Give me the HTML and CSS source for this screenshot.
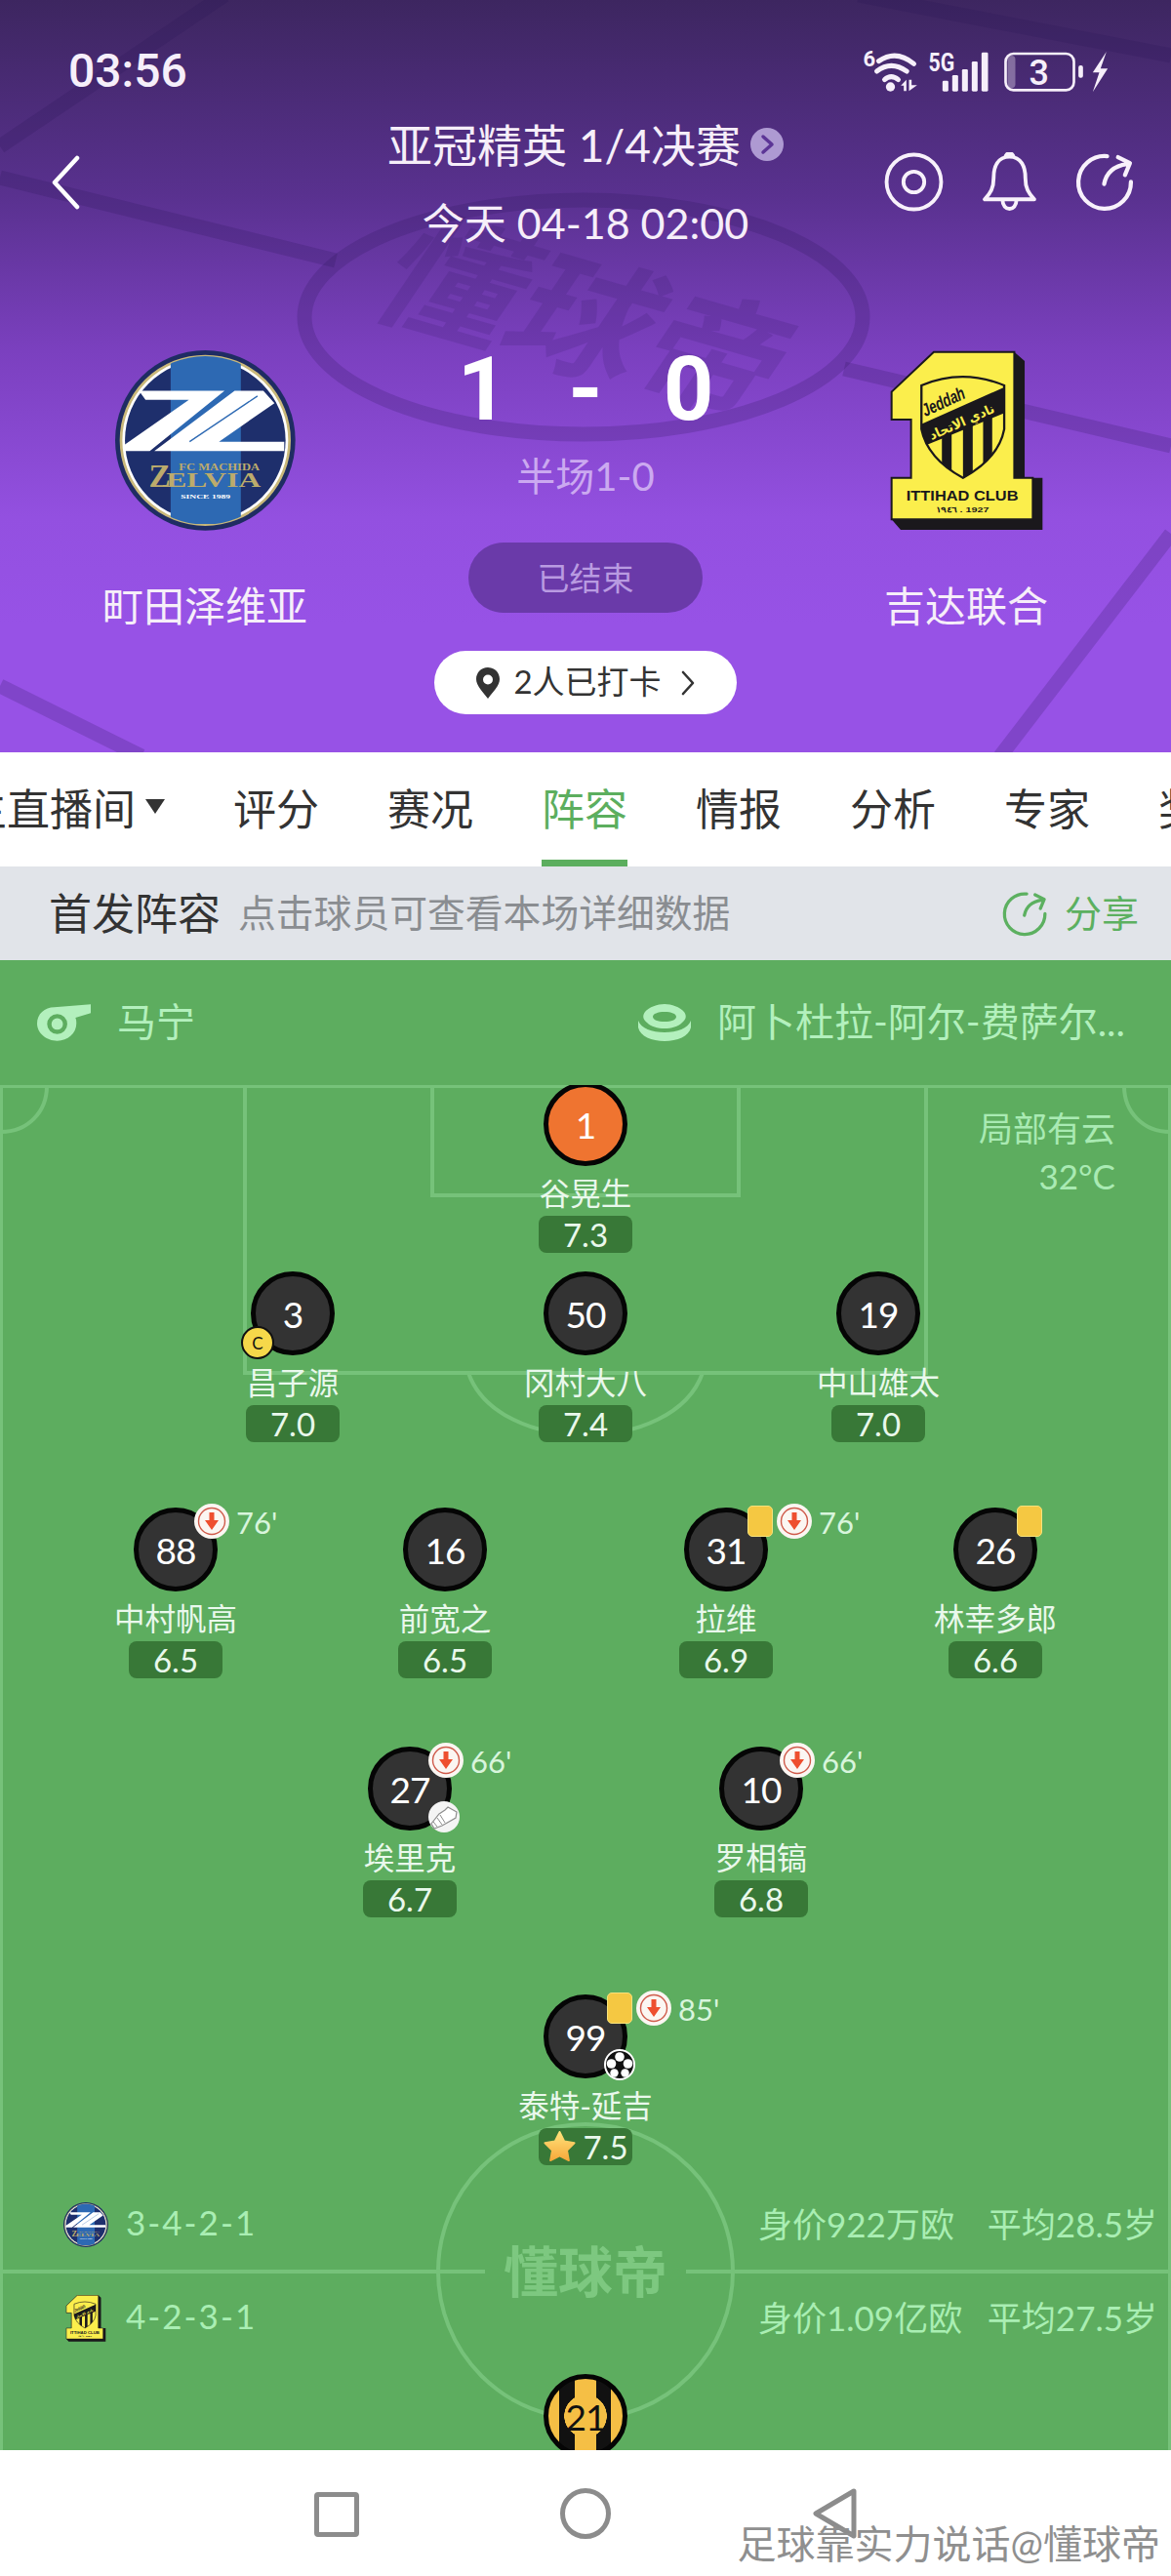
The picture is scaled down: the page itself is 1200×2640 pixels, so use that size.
FILE: index.html
```html
<!DOCTYPE html>
<html lang="zh">
<head>
<meta charset="utf-8">
<title>懂球帝 阵容</title>
<link rel="stylesheet" href="styles.css">
</head>
<body>
<svg class="defs" width="0" height="0" aria-hidden="true">
  <defs>
    <symbol id="crest-home" viewBox="112 88 553 553">
      <clipPath id="home-clip"><circle cx="388" cy="364" r="258"/></clipPath>
      <circle cx="388" cy="364" r="276" fill="#1f2c63"/>
      <circle cx="388" cy="364" r="258" fill="#fff"/>
      <circle cx="388" cy="364" r="258" fill="none" stroke="#c9b87a" stroke-width="8"/>
      <g clip-path="url(#home-clip)">
        <circle cx="388" cy="364" r="246" fill="#1e2f6c"/>
        <rect x="282" y="100" width="215" height="520" fill="#2d69b3"/>
        <path d="M185 212H447L218 397H140V378L338 240H205Z" fill="#fff"/>
        <path d="M478 212H566L600 250 430 368H630V397H232Z" fill="#fff"/>
        <path d="M548 228 340 368" stroke="#2d69b3" stroke-width="4"/>
      </g>
      <text x="307" y="455" textLength="248" lengthAdjust="spacingAndGlyphs" class="crest-serif home-small">FC MACHIDA</text>
      <text x="215" y="507" class="crest-serif home-z">Z</text>
      <text x="268" y="507" textLength="290" lengthAdjust="spacingAndGlyphs" class="crest-serif home-elvia">ELVIA</text>
      <text x="313" y="541" textLength="152" lengthAdjust="spacingAndGlyphs" class="crest-serif home-since">SINCE 1989</text>
    </symbol>
    <symbol id="crest-away" viewBox="95 58 472 554">
      <clipPath id="away-clip"><path d="M192 165Q318 112 447 165V300Q430 390 320 450Q210 390 192 300Z"/></clipPath>
      <path d="M128 610 100 578V450H160V270H100V185L230 62H478L510 90V450H565V610Z" fill="#1a181c"/>
      <path d="M100 578V450H160V270H100V185L230 62H478V450H535V578Z" fill="#fbee4c" stroke="#1a181c" stroke-width="6"/>
      <path d="M192 165Q318 112 447 165V300Q430 390 320 450Q210 390 192 300Z" fill="#fbee4c"/>
      <g clip-path="url(#away-clip)">
        <path d="M180 290 460 165V245L180 360Z" fill="#1a181c"/>
        <path d="M255 300h30v160h-30zM320 270h30v190h-30zM382 245h28v190h-28z" fill="#1a181c"/>
      </g>
      <path d="M192 165Q318 112 447 165V300Q430 390 320 450Q210 390 192 300Z" fill="none" stroke="#1a181c" stroke-width="7"/>
      <text x="204" y="262" textLength="140" lengthAdjust="spacingAndGlyphs" class="crest-jeddah" transform="rotate(-25 204 262)">Jeddah</text>
      <text x="322" y="290" textLength="215" lengthAdjust="spacingAndGlyphs" class="crest-arabic" transform="rotate(-24 322 290)">نادي الاتحاد</text>
      <text x="318" y="520" textLength="345" lengthAdjust="spacingAndGlyphs" class="crest-club">ITTIHAD CLUB</text>
      <text x="318" y="556" textLength="165" lengthAdjust="spacingAndGlyphs" class="crest-year">١٩٤٦ . 1927</text>
    </symbol>
    <symbol id="share" viewBox="0 0 60 60">
      <path d="M32 4A26.500 26.500 0 1 0 56 30" fill="none" stroke="currentColor" stroke-width="4.200" stroke-linecap="round"/>
      <path d="M29 32C31 22 38 14 52 12M43 5 55 11 50 23" fill="none" stroke="currentColor" stroke-width="4.200" stroke-linecap="round" stroke-linejoin="round"/>
    </symbol>
    <symbol id="sub-off" viewBox="0 0 36 36">
      <circle cx="18" cy="18" r="18" fill="#fbf6f2"/>
      <circle cx="18" cy="18" r="13.500" fill="none" stroke="#cf5b4b" stroke-width="1.400"/>
      <path d="M15.500 9h5v8H25L18 27 11 17h4.500Z" fill="#ee4f2f"/>
    </symbol>
    <linearGradient id="star-fill" x1="0" y1="0" x2="0" y2="1">
      <stop offset="0" stop-color="#ffe27a"/>
      <stop offset="1" stop-color="#f7a93b"/>
    </linearGradient>
  </defs>
</svg>

<main class="phone">
  <header class="hero">
    <svg class="hero-art" viewBox="0 0 1200 771" aria-hidden="true">
      <g fill="none" class="hero-lines">
        <ellipse cx="598" cy="325" rx="286" ry="120"/>
        <path d="M0 182 344 267M230 -5 0 150M880 -5 1200 57M865 378 1200 457M1200 547 1025 775M0 703 145 775"/>
      </g>
      <text class="hero-mark" x="0" y="48" transform="translate(600 330) rotate(16) skewX(-18)">懂球帝</text>
    </svg>

    <div class="status">
      <span class="clock">03:56</span>
      <svg class="status-icons" viewBox="70 60 770 135" aria-hidden="true">
        <text x="74" y="110" class="st-6">6</text>
        <g fill="none" stroke="#f6effa" stroke-width="15" stroke-linecap="round">
          <path d="M122 95Q175 58 230 103"/>
          <path d="M116 126Q160 92 208 126"/>
          <path d="M140 152Q160 134 182 152"/>
        </g>
        <circle cx="158" cy="174" r="14" fill="#f6effa"/>
        <path d="M207 152V187H199V170H190ZM215 187V152H223V169H240Z" fill="#f6effa"/>
        <text x="275" y="125" textLength="80" lengthAdjust="spacingAndGlyphs" class="st-5g">5G</text>
        <g fill="#f6effa">
          <rect x="318" y="155" width="18" height="33" rx="4"/>
          <rect x="348" y="138" width="18" height="50" rx="4"/>
          <rect x="378" y="120" width="18" height="68" rx="4"/>
          <rect x="408" y="96" width="18" height="92" rx="4"/>
          <rect x="438" y="68" width="20" height="120" rx="4"/>
        </g>
        <rect x="512" y="72" width="210" height="112" rx="24" fill="none" stroke="#f6effa" stroke-width="8"/>
        <rect x="518" y="78" width="24" height="100" rx="12" fill="#f6effa" opacity=".35"/>
        <text x="615" y="168" class="st-bat">3</text>
        <rect x="736" y="108" width="14" height="38" rx="6" fill="#f6effa"/>
        <path d="M822 66 780 130H800L780 190 826 118H804Z" fill="#f6effa"/>
      </svg>
    </div>

    <div class="topbar">
      <svg class="back" viewBox="0 0 30 56" aria-hidden="true"><path d="M27 3 4 28l23 25" fill="none" stroke="#fff" stroke-width="4.500" stroke-linecap="round" stroke-linejoin="round"/></svg>
      <div class="titles">
        <div class="title">亚冠精英 1/4决赛<svg class="title-go" viewBox="0 0 34 34" aria-hidden="true"><circle cx="17" cy="17" r="17" fill="#ae9ad2"/><path d="M13 9l9 8-9 8" fill="none" stroke="#5c3596" stroke-width="3.500" stroke-linecap="round" stroke-linejoin="round"/></svg></div>
        <div class="date">今天 04-18 02:00</div>
      </div>
      <div class="top-icons">
        <svg class="top-icon" viewBox="0 0 60 60" aria-hidden="true"><g fill="none" stroke="#f8f1fb" stroke-width="3.800"><circle cx="30" cy="30" r="27.500"/><circle cx="30" cy="30" r="10.500"/></g></svg>
        <svg class="top-icon" viewBox="0 0 60 60" aria-hidden="true"><g fill="none" stroke="#f8f1fb" stroke-width="3.800" stroke-linejoin="round"><path d="M30 4.500C18 4.500 14 15 14 26 14 36 11 41 5 47.500H55C49 41 46 36 46 26 46 15 42 4.500 30 4.500Z"/><path d="M23 48c0 12 14 12 14 0"/><path d="M26 5c0-5 8-5 8 0"/></g></svg>
        <svg class="top-icon share-white" aria-hidden="true"><use href="#share"/></svg>
      </div>
    </div>

    <section class="score">
      <div class="team">
        <svg class="crest crest-h" aria-hidden="true"><use href="#crest-home"/></svg>
        <div class="team-name">町田泽维亚</div>
      </div>
      <div class="mid">
        <div class="result"><span>1</span><span class="dash">-</span><span>0</span></div>
        <div class="half">半场1-0</div>
        <div class="state">已结束</div>
        <div class="checkin">
          <svg class="pin" viewBox="0 0 24 32" aria-hidden="true"><path fill-rule="evenodd" d="M12 0C5 0 0 5.500 0 12c0 7 7 13 12 20 5-7 12-13 12-20C24 5.500 19 0 12 0Zm0 7.500a5 5 0 1 1 0 10 5 5 0 0 1 0-10Z" fill="#333"/></svg>
          <span class="checkin-text">2人已打卡</span>
          <svg class="chev" viewBox="0 0 14 26" aria-hidden="true"><path d="M2 2l10 11L2 24" fill="none" stroke="#333" stroke-width="2.600" stroke-linecap="round" stroke-linejoin="round"/></svg>
        </div>
      </div>
      <div class="team">
        <svg class="crest crest-a" aria-hidden="true"><use href="#crest-away"/></svg>
        <div class="team-name">吉达联合</div>
      </div>
    </section>
  </header>

  <nav class="tabs">
    <span class="tab">主直播间<i class="caret"></i></span>
    <span class="tab">评分</span>
    <span class="tab">赛况</span>
    <span class="tab tab-on">阵容</span>
    <span class="tab">情报</span>
    <span class="tab">分析</span>
    <span class="tab">专家</span>
    <span class="tab">奖励</span>
  </nav>

  <div class="subhead">
    <strong class="sub-title">首发阵容</strong>
    <span class="sub-hint">点击球员可查看本场详细数据</span>
    <span class="sub-share"><svg class="sub-share-ic" aria-hidden="true"><use href="#share"/></svg><span class="sub-share-text">分享</span></span>
  </div>

  <div class="meta">
    <span class="meta-item">
      <svg class="whistle" viewBox="0 0 56 38" aria-hidden="true"><path fill-rule="evenodd" d="M18 3 56 0v9l-16 5c1 2 1 4 1 6 0 10-9 18-20 18S0 30 0 20 8 3 18 3Zm3 7a10.500 10.500 0 1 0 0 21 10.500 10.500 0 0 0 0-21Zm0 4.500a6 6 0 1 1 0 12 6 6 0 0 1 0-12Z" fill="#b3f0bd"/></svg>
      <span class="meta-text">马宁</span>
    </span>
    <span class="meta-item">
      <svg class="stadium" viewBox="0 0 54 38" aria-hidden="true"><g fill="#b3f0bd"><path d="M0 17c3 8 14 12 27 12s24-4 27-12v7c-2 9-14 14-27 14S2 33 0 24Z"/><path fill-rule="evenodd" d="M27 0c7 0 16 3 20 8 3 4 2 8-2 11-4 4-11 6-18 6s-14-2-18-6C5 16 4 12 7 8c4-5 13-8 20-8Zm0 8c-7 0-12 2-12 5s5 5 12 5 12-2 12-5-5-5-12-5Z"/></g></svg>
      <span class="meta-text">阿卜杜拉-阿尔-费萨尔...</span>
    </span>
  </div>

  <section class="pitch">
    <svg class="pitch-lines" viewBox="0 0 1200 1399" aria-hidden="true">
      <g fill="none" stroke="#76c27a" stroke-width="4">
        <path d="M1 0V1399M1199 0V1399M0 1H1200"/>
        <path d="M251 1V295H949V1M443 1V113H757V1"/>
        <path d="M1 48C28 48 48 28 48 1M1199 48C1172 48 1152 28 1152 1"/>
        <path d="M480 295C510 380 690 380 720 295"/>
        <path d="M0 1216H497M703 1216H1200"/>
        <circle cx="600" cy="1216" r="151"/>
      </g>
    </svg>
    <div class="weather"><span>局部有云</span><span>32°C</span></div>
    <div class="pitch-logo">懂球帝</div>

    <div class="side side-home">
      <svg class="mini" aria-hidden="true"><use href="#crest-home"/></svg>
      <span class="shape">3-4-2-1</span>
      <span class="worth">身价922万欧</span>
      <span class="age">平均28.5岁</span>
    </div>
    <div class="side side-away">
      <svg class="mini" aria-hidden="true"><use href="#crest-away"/></svg>
      <span class="shape">4-2-3-1</span>
      <span class="worth">身价1.09亿欧</span>
      <span class="age">平均27.5岁</span>
    </div>

    <div class="row row-gk">
      <div class="player"><div class="disc disc-gk">1</div><div class="name">谷晃生</div><div class="rating">7.3</div></div>
    </div>
    <div class="row row-def">
      <div class="player"><div class="disc">3<span class="cap">C</span></div><div class="name">昌子源</div><div class="rating">7.0</div></div>
      <div class="player"><div class="disc">50</div><div class="name">冈村大八</div><div class="rating">7.4</div></div>
      <div class="player"><div class="disc">19</div><div class="name">中山雄太</div><div class="rating">7.0</div></div>
    </div>
    <div class="row row-mid">
      <div class="player"><div class="disc">88<svg class="sub" aria-hidden="true"><use href="#sub-off"/></svg><span class="minute">76'</span></div><div class="name">中村帆高</div><div class="rating">6.5</div></div>
      <div class="player"><div class="disc">16</div><div class="name">前宽之</div><div class="rating">6.5</div></div>
      <div class="player"><div class="disc">31<span class="card"></span><svg class="sub sub-next" aria-hidden="true"><use href="#sub-off"/></svg><span class="minute minute-next">76'</span></div><div class="name">拉维</div><div class="rating">6.9</div></div>
      <div class="player"><div class="disc">26<span class="card"></span></div><div class="name">林幸多郎</div><div class="rating">6.6</div></div>
    </div>
    <div class="row row-att">
      <div class="player"><div class="disc">27<svg class="sub" aria-hidden="true"><use href="#sub-off"/></svg><span class="minute">66'</span>
        <svg class="event" viewBox="0 0 32 32" aria-hidden="true"><circle cx="16" cy="16" r="16" fill="#f4f4f4"/><path d="M3 23 11 13l6-4 3-3 9 5-1 6-14 8-8 3Z" fill="#fff" stroke="#8d8d8d" stroke-width="1.200"/><path d="M5 21l4 5M9 17l5 7M12 14l5 8" stroke="#8d8d8d" stroke-width="1"/></svg>
      </div><div class="name">埃里克</div><div class="rating">6.7</div></div>
      <div class="player"><div class="disc">10<svg class="sub" aria-hidden="true"><use href="#sub-off"/></svg><span class="minute">66'</span></div><div class="name">罗相镐</div><div class="rating">6.8</div></div>
    </div>
    <div class="row row-fwd">
      <div class="player"><div class="disc">99<span class="card"></span><svg class="sub sub-next" aria-hidden="true"><use href="#sub-off"/></svg><span class="minute minute-next">85'</span>
        <svg class="event" viewBox="0 0 32 32" aria-hidden="true"><circle cx="16" cy="16" r="15" fill="#111" stroke="#fff" stroke-width="2"/><g fill="#fff"><circle cx="16" cy="8" r="4.800"/><circle cx="7.500" cy="15" r="4.800"/><circle cx="24.500" cy="15" r="4.800"/><circle cx="10.500" cy="24.500" r="4.200"/><circle cx="21.500" cy="24.500" r="4.200"/></g></svg>
      </div><div class="name">泰特-延吉</div>
        <div class="rating rating-star"><svg class="star" viewBox="0 0 36 34" aria-hidden="true"><path d="M18 1l5 10 11 2-8 8 2 11-10-5-10 5 2-11-8-8 11-2Z" fill="url(#star-fill)" stroke="url(#star-fill)" stroke-width="2" stroke-linejoin="round"/></svg>7.5</div></div>
    </div>
    <div class="row row-away">
      <div class="player"><div class="disc disc-away">21</div></div>
    </div>
  </section>

  <footer class="navbar">
    <span class="nav-square"></span>
    <span class="nav-circle"></span>
    <svg class="nav-back" viewBox="0 0 46 52" aria-hidden="true"><path d="M43 3 4 26l39 23Z" fill="none" stroke="#8c8c8c" stroke-width="5" stroke-linejoin="round"/></svg>
    <span class="stamp">足球靠实力说话@懂球帝</span>
  </footer>
</main>
</body>
</html>
```

FILE: styles.css
```css
* { box-sizing: border-box; }
html, body { margin: 0; padding: 0; }
body {
  width: 1200px;
  height: 2640px;
  overflow: hidden;
  background: #fff;
  font-family: "Lato", "Noto Sans CJK SC", sans-serif;
}
.defs { position: absolute; }
.phone { display: flex; flex-direction: column; width: 1200px; height: 2640px; overflow: hidden; }

/* Crest lettering */
.crest-serif { font-family: "Liberation Serif", serif; font-weight: 700; fill: #bcab6c; }
.home-small { font-size: 32px; }
.home-z { font-size: 100px; }
.home-elvia { font-size: 60px; }
.home-since { font-size: 20px; fill: #fff; }
.crest-jeddah { font: italic 700 56px "Liberation Sans", sans-serif; fill: #1a181c; }
.crest-arabic { font: 700 40px "DejaVu Sans", sans-serif; fill: #fbee4c; text-anchor: middle; }
.crest-club { font: 700 46px "Liberation Sans", sans-serif; fill: #1a181c; text-anchor: middle; }
.crest-year { font: 700 24px "Liberation Sans", sans-serif; fill: #1a181c; text-anchor: middle; }

/* Hero */
.hero {
  position: relative;
  height: 771px;
  flex: none;
  overflow: hidden;
  color: #fff;
  background: linear-gradient(180deg, #3d2660 0, #59318f 200px, #7b40bf 360px, #9350e0 530px, #9752e6 640px);
}
.hero-art { position: absolute; inset: 0; width: 1200px; height: 771px; }
.hero-lines { stroke: rgba(42, 18, 84, .2); stroke-width: 15; }
.hero-mark { font-size: 138px; font-weight: 700; text-anchor: middle; fill: rgba(42, 18, 84, .15); font-family: "Noto Sans CJK SC", sans-serif; }
.status, .topbar, .score { position: relative; }
.status { display: flex; justify-content: space-between; align-items: center; height: 110px; padding: 36px 60px 0 70px; }
.clock { font: 500 48px/1 "Roboto", sans-serif; color: #f6effa; }
.status-icons { width: 257px; height: 45px; overflow: visible; }
.st-6 { font: 700 66px "Roboto", sans-serif; fill: #f6effa; }
.st-5g { font: 700 76px "Roboto", sans-serif; fill: #f6effa; }
.st-bat { font: 500 108px "Roboto", sans-serif; fill: #f6effa; text-anchor: middle; }

.topbar { display: grid; grid-template-columns: 300px 600px 300px; height: 157px; }
.back { width: 30px; height: 56px; margin: 49px 0 0 52px; }
.titles { display: flex; flex-direction: column; align-items: center; }
.title { display: flex; align-items: center; gap: 10px; height: 72px; font-size: 46px; color: #f6eef9; white-space: nowrap; }
.title-go { width: 34px; height: 34px; margin-top: 4px; }
.date { height: 74px; margin-top: 10px; line-height: 74px; font-size: 43px; color: #f6eef9; white-space: nowrap; }
.top-icons { display: flex; gap: 37px; padding: 46px 0 0 6px; }
.top-icon { width: 61px; height: 61px; }
.share-white { color: #f8f1fb; }

.score { display: grid; grid-template-columns: 420px 360px 420px; }
.team { display: flex; flex-direction: column; align-items: center; padding-top: 92px; }
.crest { display: block; }
.crest-h { width: 185px; height: 185px; }
.crest-a { width: 157px; height: 185px; }
.team-name { margin-top: 47px; height: 60px; line-height: 60px; font-size: 42px; color: #f6eef9; white-space: nowrap; }
.mid { display: flex; flex-direction: column; align-items: center; padding-top: 83px; }
.result { display: flex; justify-content: center; align-items: center; gap: 62px; height: 100px; font: 700 90px/100px "Roboto", sans-serif; color: #fff; }
.half { height: 50px; margin-top: 13px; line-height: 50px; font-size: 40px; color: #cba9f0; white-space: nowrap; }
.state { display: flex; align-items: center; justify-content: center; width: 240px; height: 72px; margin-top: 43px; padding-bottom: 2px; border-radius: 36px; background: #6a3aa9; color: #b99be1; font-size: 33px; }
.checkin { display: flex; align-items: center; justify-content: center; gap: 14px; width: 310px; height: 65px; margin-top: 39px; border-radius: 33px; background: #fff; color: #333; font-size: 33px; white-space: nowrap; }
.checkin-text { padding-bottom: 5px; }
.pin { width: 24px; height: 32px; }
.chev { width: 14px; height: 26px; margin-left: 6px; }

/* Tabs */
.tabs { display: flex; flex: none; gap: 70px; height: 117px; margin-left: -37px; background: #fff; white-space: nowrap; }
.tab { position: relative; display: flex; align-items: center; height: 117px; padding-bottom: 6px; font-size: 44px; color: #333; }
.tab-on { color: #5cae5e; }
.tab-on::after { content: ""; position: absolute; left: 0; right: 0; bottom: 0; height: 7px; background: #5cae5e; }
.caret { width: 0; height: 0; margin-left: 10px; border-left: 10px solid transparent; border-right: 10px solid transparent; border-top: 15px solid #333; }

/* Section heading */
.subhead { display: flex; flex: none; align-items: center; height: 96px; padding: 0 33px 0 50px; background: #e1e4e9; white-space: nowrap; }
.sub-title { padding-bottom: 5px; font-size: 44px; font-weight: 400; color: #333; }
.sub-hint { margin-left: 18px; padding-bottom: 6px; font-size: 38.800px; color: #8a8d91; }
.sub-share { display: flex; align-items: center; gap: 17px; margin-left: auto; font-size: 38px; color: #5cb060; }
.sub-share-text { padding-bottom: 6px; }
.sub-share-ic { width: 47px; height: 47px; }

.meta { display: flex; flex: none; justify-content: space-between; align-items: center; height: 128px; padding: 0 47px 0 38px; background: #5dad5f; color: #b3f0bd; font-size: 40px; white-space: nowrap; }
.meta-item { display: flex; align-items: center; gap: 27px; }
.meta-text { padding-bottom: 6px; }
.whistle { width: 55px; height: 38px; }
.stadium { width: 54px; height: 38px; }

/* Pitch */
.pitch { position: relative; flex: 1; overflow: hidden; background: #5dad5f; display: flex; flex-direction: column; }
.pitch-lines { position: absolute; left: 0; top: 0; width: 1200px; height: 1399px; }
.weather { position: absolute; top: 22px; right: 57px; display: flex; flex-direction: column; align-items: flex-end; gap: 5px; font-size: 35px; line-height: 44px; color: #a9eab3; }
.pitch-logo { position: absolute; left: 497px; top: 1178px; width: 206px; text-align: center; font-size: 56px; line-height: 76px; font-weight: 700; color: #7dc880; }

.side { position: absolute; left: 65px; right: 14px; display: flex; align-items: center; height: 48px; color: #a9eeb3; font-size: 35px; white-space: nowrap; }
.side-home { top: 1144px; }
.side-away { top: 1240px; }
.mini { width: 46px; height: 48px; }
.shape { margin-left: 18px; padding-bottom: 6px; letter-spacing: 2px; }
.worth { position: absolute; left: 712px; padding-bottom: 6px; }
.age { margin-left: auto; padding-bottom: 6px; }

.row { position: relative; display: flex; justify-content: center; flex: none; }
.row-gk { margin-top: -3px; }
.row-def { margin-top: 19px; gap: 100px; }
.row-mid { margin-top: 67px; gap: 76px; }
.row-mid .player:nth-child(2) { margin-right: 12px; }
.row-att { margin-top: 70px; gap: 160px; }
.row-fwd { margin-top: 79px; }
.row-away { margin-top: 214px; }

.player { display: flex; flex-direction: column; align-items: center; width: 200px; }
.disc { position: relative; display: flex; align-items: center; justify-content: center; width: 86px; height: 86px; border: 5px solid #050505; border-radius: 50%; background: #333; color: #fff; font-size: 37px; letter-spacing: -1px; }
.disc-gk { background: #ef7430; }
.disc-away {
  background:
    radial-gradient(circle 22px at center, #f5bf45 98%, transparent 100%),
    linear-gradient(90deg, #f5bf45 0 14%, #111 14% 36%, #f5bf45 36% 64%, #111 64% 84%, #f5bf45 84%);
  color: #111;
}
.name { height: 51px; line-height: 57px; font-size: 31.500px; color: #e9f8ec; white-space: nowrap; }
.rating { display: flex; align-items: center; justify-content: center; width: 96px; height: 38px; border-radius: 8px; background: #387837; color: #e9f8ec; font-size: 33px; }
.rating-star { gap: 6px; }
.star { width: 35px; height: 32px; }

/* The badges sit on the disc's padding box, so offsets are measured from inside the 5px border. */
.sub { position: absolute; left: 57px; top: -9px; width: 36px; height: 36px; }
.sub-next { left: 90px; }
.minute { position: absolute; left: 100px; top: -8px; font-size: 31px; line-height: 36px; letter-spacing: 0; color: #d8f5dc; white-space: nowrap; }
.minute-next { left: 133px; }
.card { position: absolute; left: 60px; top: -7px; width: 26px; height: 32px; border: 1px solid #f7e27c; border-radius: 5px; background: #f5c842; }
.event { position: absolute; left: 57px; top: 51px; width: 32px; height: 32px; }
.cap { position: absolute; left: -15px; top: 51px; display: flex; align-items: center; justify-content: center; width: 34px; height: 34px; border: 2px solid #111; border-radius: 50%; background: #f6d84a; color: #111; font-size: 17px; letter-spacing: 0; }

/* Android nav bar */
.navbar { position: relative; display: flex; flex: none; align-items: center; height: 129px; background: #fff; }
.nav-square { position: absolute; left: 322px; top: 43px; width: 46px; height: 46px; border: 5px solid #8c8c8c; border-radius: 4px; }
.nav-circle { position: absolute; left: 574px; top: 39px; width: 52px; height: 52px; border: 5px solid #8c8c8c; border-radius: 50%; }
.nav-back { position: absolute; left: 832px; top: 39px; width: 46px; height: 52px; }
.stamp { position: absolute; right: 11px; top: 66px; font-size: 40px; line-height: 60px; color: #8f8f8f; white-space: nowrap; }
```
